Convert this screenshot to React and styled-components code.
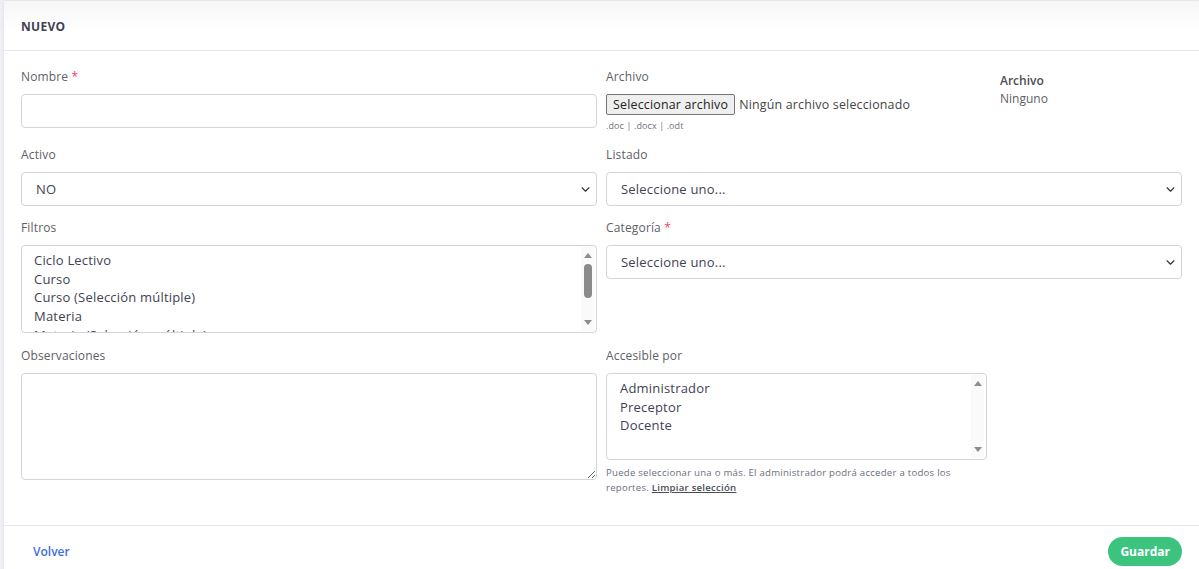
import styled, { createGlobalStyle } from "styled-components";

const GlobalStyle = createGlobalStyle`
  html, body {
    margin: 0;
    padding: 0;
    background: #eef0f3;
    font-family: "Open Sans", "Liberation Sans", sans-serif;
  }
  * { box-sizing: border-box; }
`;

const chevron =
  "data:image/svg+xml;charset=utf-8," +
  encodeURIComponent(
    '<svg xmlns="http://www.w3.org/2000/svg" viewBox="0 0 16 16"><path fill="none" stroke="#343a40" stroke-linecap="round" stroke-linejoin="round" stroke-width="2.2" d="M2 5l6 6 6-6"/></svg>'
  );

const filtros = [
  "Ciclo Lectivo",
  "Curso",
  "Curso (Selección múltiple)",
  "Materia",
  "Materia (Selección múltiple)",
  "Alumno",
];

const roles = ["Administrador", "Preceptor", "Docente"];

export default function App() {
  return (
    <>
      <GlobalStyle />
      <Page>
        <Card>
          <Header>NUEVO</Header>
          <Body>
            <Row $height={65}>
              <Field>
                <Label>
                  Nombre <Req>*</Req>
                </Label>
                <Input type="text" />
              </Field>
              <Split>
                <Field>
                  <Label>Archivo</Label>
                  <FileRow>
                    <FileButton type="button">Seleccionar archivo</FileButton>
                    <FileName>Ningún archivo seleccionado</FileName>
                  </FileRow>
                  <Hint>.doc | .docx | .odt</Hint>
                </Field>
                <Current>
                  <strong>Archivo</strong>
                  <span>Ninguno</span>
                </Current>
              </Split>
            </Row>

            <Row>
              <Field>
                <Label>Activo</Label>
                <Select defaultValue="NO">
                  <option>NO</option>
                  <option>SI</option>
                </Select>
              </Field>
              <Field>
                <Label>Listado</Label>
                <Select>
                  <option>Seleccione uno...</option>
                </Select>
              </Field>
            </Row>

            <Row>
              <Field>
                <Label>Filtros</Label>
                <ListBox $height={88}>
                  <Options $pad={12}>
                    {filtros.map((f) => (
                      <Option key={f}>{f}</Option>
                    ))}
                  </Options>
                  <ScrollBar>
                    <ArrowUp />
                    <Thumb />
                    <Spacer />
                    <ArrowDown />
                  </ScrollBar>
                </ListBox>
              </Field>
              <Field>
                <Label>
                  Categoría <Req>*</Req>
                </Label>
                <Select>
                  <option>Seleccione uno...</option>
                </Select>
              </Field>
            </Row>

            <Row $top={1}>
              <Field>
                <Label>Observaciones</Label>
                <TextArea />
              </Field>
              <Field>
                <Label>Accesible por</Label>
                <Narrow>
                  <ListBox $height={87}>
                    <Options $pad={13}>
                      {roles.map((r) => (
                        <Option key={r}>{r}</Option>
                      ))}
                    </Options>
                    <ScrollBar>
                      <ArrowUp />
                      <Spacer />
                      <ArrowDown />
                    </ScrollBar>
                  </ListBox>
                  <Help>
                    Puede seleccionar una o más. El administrador podrá acceder a
                    todos los reportes. <ClearLink href="#">Limpiar selección</ClearLink>
                  </Help>
                </Narrow>
              </Field>
            </Row>
          </Body>
          <Footer>
            <BackLink href="#">Volver</BackLink>
            <SaveButton type="button">Guardar</SaveButton>
          </Footer>
        </Card>
      </Page>
    </>
  );
}

const Page = styled.div`
  padding: 1px 0 0 4px;
  min-height: 569px;
`;

const Card = styled.div`
  background: #fff;
  box-shadow: 0 0 4px rgba(0, 0, 0, 0.08);
  min-height: 568px;
  display: flex;
  flex-direction: column;
`;

const Header = styled.div`
  height: 50px;
  border-bottom: 1px solid #e4e6ef;
  padding: 17px 17px 0;
  font-size: 12px;
  font-weight: 700;
  color: #3f4254;
  letter-spacing: 0.3px;
  background: linear-gradient(#f6f6f7, #fff 60%);
`;

const Body = styled.div`
  padding: 17px 17px 0;
  height: 475px;
  display: flex;
  flex-direction: column;
  gap: 13px;
  border-bottom: 1px solid #e4e6ef;
`;

const Row = styled.div`
  display: grid;
  grid-template-columns: 576px 576px;
  column-gap: 9px;
  height: ${(p) => (p.$height ? `${p.$height}px` : "auto")};
  margin-top: ${(p) => p.$top || 0}px;
`;

const Field = styled.div`
  display: flex;
  flex-direction: column;
`;

const Split = styled.div`
  display: grid;
  grid-template-columns: 394px 1fr;
`;

const Label = styled.label`
  font-size: 12px;
  letter-spacing: 0.15px;
  color: #5e6066;
  margin-bottom: 8px;
  line-height: 18px;
`;

const Req = styled.span`
  color: #f1416c;
`;

const controlBase = `
  font-family: inherit;
  font-size: 13px;
  color: #3f4254;
  border: 1px solid #d2d4da;
  border-radius: 4px;
  background-color: #fff;
  outline: none;
`;

const Input = styled.input`
  ${controlBase}
  height: 34px;
  padding: 0 14px;
`;

const Select = styled.select`
  ${controlBase}
  height: 34px;
  padding: 0 14px;
  letter-spacing: 0.2px;
  appearance: none;
  background-image: url("${chevron}");
  background-repeat: no-repeat;
  background-position: right 6px center;
  background-size: 9px 9px;
`;

const ListBox = styled.div`
  ${controlBase}
  height: ${(p) => p.$height}px;
  display: flex;
  overflow: hidden;
  padding-right: 2px;
`;

const Options = styled.div`
  flex: 1;
  padding: 5px ${(p) => p.$pad}px;
  overflow: hidden;
`;

const Option = styled.div`
  font-size: 13px;
  letter-spacing: 0.2px;
  line-height: 18.7px;
  color: #3f4254;
  white-space: nowrap;
`;

const ScrollBar = styled.div`
  width: 13px;
  margin: 1px 0;
  background: #fafafa;
  display: flex;
  flex-direction: column;
  align-items: center;
  padding: 6px 0 6px;
`;

const ArrowUp = styled.div`
  width: 0;
  height: 0;
  border-left: 4px solid transparent;
  border-right: 4px solid transparent;
  border-bottom: 5px solid #8d8d8d;
`;

const ArrowDown = styled.div`
  width: 0;
  height: 0;
  border-left: 4px solid transparent;
  border-right: 4px solid transparent;
  border-top: 5px solid #8d8d8d;
`;

const Thumb = styled.div`
  width: 8px;
  height: 34px;
  margin-top: 6px;
  border-radius: 4px;
  background: #8b8b8b;
`;

const Spacer = styled.div`
  flex: 1;
`;

const TextArea = styled.textarea`
  ${controlBase}
  height: 107px;
  resize: vertical;
`;

const FileRow = styled.div`
  display: flex;
  align-items: center;
  gap: 4px;
`;

const FileButton = styled.button`
  font-family: inherit;
  font-size: 12.4px;
  letter-spacing: 0.2px;
  color: #222;
  background: #efefef;
  border: 1px solid #767676;
  border-radius: 2px;
  height: 21px;
  padding: 0 6px;
`;

const FileName = styled.span`
  font-size: 12.4px;
  letter-spacing: 0.2px;
  color: #444;
`;

const Hint = styled.div`
  font-size: 9px;
  color: #6f7278;
  margin-top: 4px;
  letter-spacing: 0.1px;
`;

const Current = styled.div`
  display: flex;
  flex-direction: column;
  padding-top: 4px;
  font-size: 12px;
  color: #5e6066;
  line-height: 18px;

  strong {
    color: #4b4d55;
    font-weight: 600;
  }
`;

const Narrow = styled.div`
  width: 381px;
  display: flex;
  flex-direction: column;
`;

const Help = styled.div`
  font-size: 9.6px;
  letter-spacing: 0.25px;
  color: #6c6f7a;
  line-height: 15px;
  margin-top: 5px;
  padding-right: 20px;
`;

const ClearLink = styled.a`
  color: #4b4d55;
  font-weight: 600;
  text-decoration: underline;
`;

const Footer = styled.div`
  flex: 1;
  display: flex;
  align-items: center;
  justify-content: space-between;
  padding: 8px 17px 0 29px;
`;

const BackLink = styled.a`
  color: #3e6ee0;
  font-size: 12px;
  font-weight: 600;
  text-decoration: none;
`;

const SaveButton = styled.button`
  font-family: inherit;
  background: #3cc47f;
  color: #fff;
  font-size: 12px;
  font-weight: 700;
  border: none;
  border-radius: 15px;
  height: 29px;
  padding: 0 12px;
`;
